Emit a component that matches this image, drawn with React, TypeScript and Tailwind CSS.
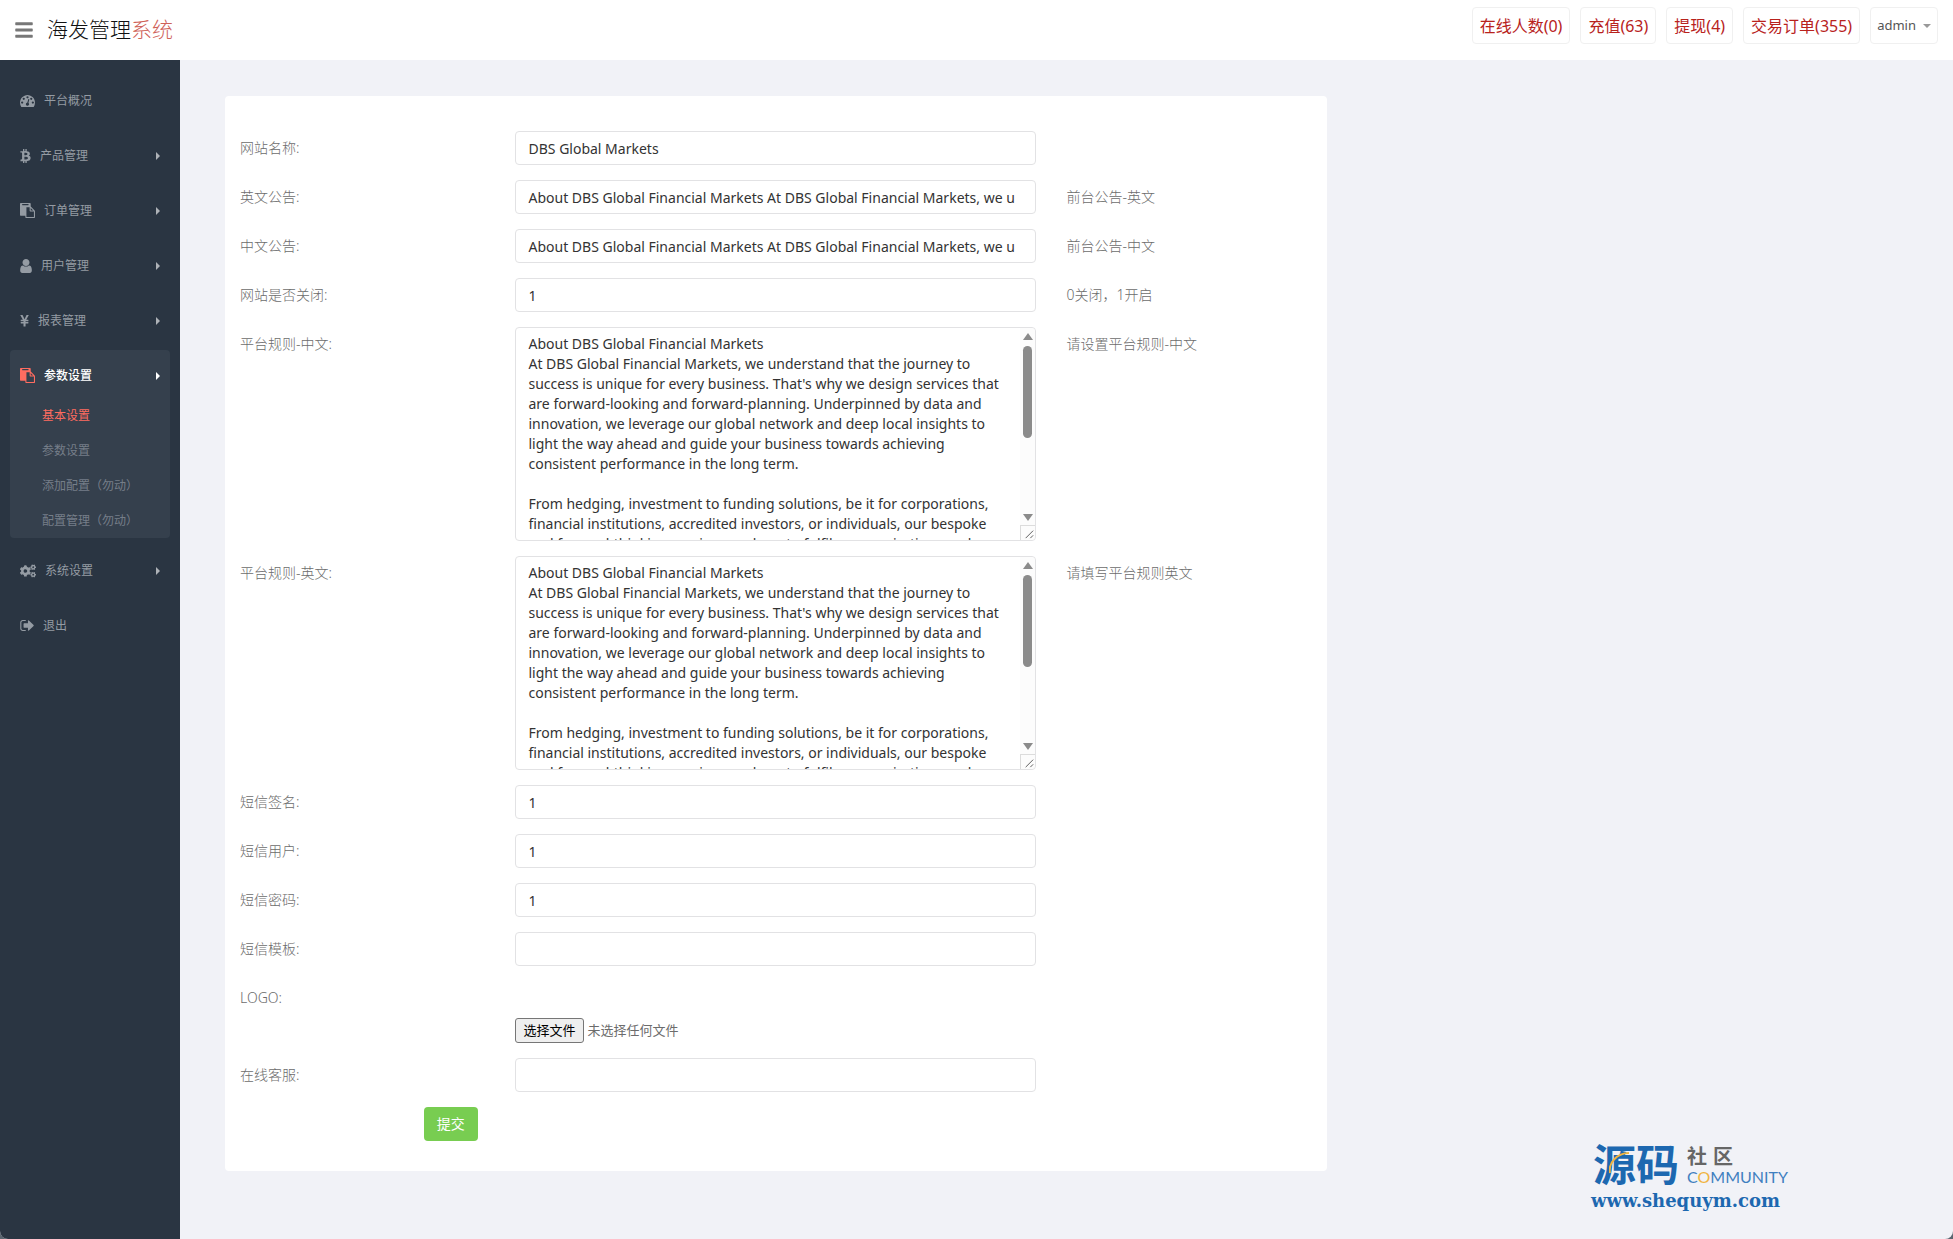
import type { FormEvent, ReactNode } from 'react'
import { FaBars, FaBtc, FaCogs } from 'react-icons/fa'

const rules = `About DBS Global Financial Markets
At DBS Global Financial Markets, we understand that the journey to success is unique for every business. That's why we design services that are forward-looking and forward-planning. Underpinned by data and innovation, we leverage our global network and deep local insights to light the way ahead and guide your business towards achieving consistent performance in the long term.

From hedging, investment to funding solutions, be it for corporations, financial institutions, accredited investors, or individuals, our bespoke and forward-thinking services are here to fulfil your aspirations and goals.

Our teams work across the region to provide access to markets in foreign exchange, interest rates, credit, equities and commodities. With an established presence in Asia, we offer timely research and ideas that support informed decisions.

Speak with our specialists to learn how a tailored approach can help you manage risk, raise capital and grow your business with confidence.

We are committed to building lasting relationships with each of our clients.`

const notice =
  'About DBS Global Financial Markets At DBS Global Financial Markets, we understand that the journey to success is unique for every business.'

interface Field {
  name: string
  label: string
  value?: string
  hint?: string
  type?: 'text' | 'textarea' | 'file'
}

const fields: Field[] = [
  { name: 'web_name', label: '网站名称:', value: 'DBS Global Markets' },
  { name: 'notice_en', label: '英文公告:', value: notice, hint: '前台公告-英文' },
  { name: 'notice_cn', label: '中文公告:', value: notice, hint: '前台公告-中文' },
  { name: 'web_open', label: '网站是否关闭:', value: '1', hint: '0关闭，1开启' },
  { name: 'rule_cn', label: '平台规则-中文:', value: rules, hint: '请设置平台规则-中文', type: 'textarea' },
  { name: 'rule_en', label: '平台规则-英文:', value: rules, hint: '请填写平台规则英文', type: 'textarea' },
  { name: 'sms_sign', label: '短信签名:', value: '1' },
  { name: 'sms_user', label: '短信用户:', value: '1' },
  { name: 'sms_pwd', label: '短信密码:', value: '1' },
  { name: 'sms_tpl', label: '短信模板:' },
  { name: 'logo', label: 'LOGO:', type: 'file' },
  { name: 'service', label: '在线客服:' },
]

const DashboardIcon = () => (
  <svg viewBox="0 256 1792 1408" className="h-3 w-[15px]" fill="currentColor">
    <path d="M384 1152q0-53-37.5-90.5t-90.5-37.5-90.5 37.5-37.5 90.5 37.5 90.5 90.5 37.5 90.5-37.5 37.5-90.5zm192-448q0-53-37.5-90.5t-90.5-37.5-90.5 37.5-37.5 90.5 37.5 90.5 90.5 37.5 90.5-37.5 37.5-90.5zm428 481l101-382q6-26-7.5-48.5t-38.5-29.5-48 6.5-30 39.5l-101 382q-60 5-107 43.5t-63 98.5q-20 77 20 146t117 89 146-20 89-117q16-60-6-117t-72-91zm660-33q0-53-37.5-90.5t-90.5-37.5-90.5 37.5-37.5 90.5 37.5 90.5 90.5 37.5 90.5-37.5 37.5-90.5zm-640-640q0-53-37.5-90.5t-90.5-37.5-90.5 37.5-37.5 90.5 37.5 90.5 90.5 37.5 90.5-37.5 37.5-90.5zm448 192q0-53-37.5-90.5t-90.5-37.5-90.5 37.5-37.5 90.5 37.5 90.5 90.5 37.5 90.5-37.5 37.5-90.5zm320 448q0 261-141 483-19 29-54 29h-1402q-35 0-54-29-141-221-141-483 0-182 71-348t191-286 286-191 348-71 348 71 286 191 191 286 71 348z" />
  </svg>
)

const PasteIcon = () => (
  <svg viewBox="0 0 1792 1792" className="size-[15px]" fill="currentColor">
    <path d="M768 1664h896v-640h-416q-40 0-68-28t-28-68v-416h-384v1152zm256-1440v-64q0-13-9.5-22.5t-22.5-9.5h-704q-13 0-22.5 9.5t-9.5 22.5v64q0 13 9.5 22.5t22.5 9.5h704q13 0 22.5-9.5t9.5-22.5zm256 672h299l-299-299v299zm512 128v672q0 40-28 68t-68 28h-960q-40 0-68-28t-28-68v-160h-544q-40 0-68-28t-28-68v-1344q0-40 28-68t68-28h1088q40 0 68 28t28 68v328q21 13 36 28l408 408q28 28 48 76t20 88z" />
  </svg>
)

const UserIcon = () => (
  <svg viewBox="256 128 1280 1536" className="h-[14px] w-3" fill="currentColor">
    <path d="M1536 1399q0 109-62.5 187t-150.5 78h-854q-88 0-150.5-78t-62.5-187q0-85 8.5-160.5t31.5-152 58.5-131 94-89 134.5-34.5q131 128 313 128t313-128q76 0 134.5 34.5t94 89 58.5 131 31.5 152 8.5 160.5zm-256-887q0 159-112.5 271.5t-271.5 112.5-271.5-112.5-112.5-271.5 112.5-271.5 271.5-112.5 271.5 112.5 112.5 271.5z" />
  </svg>
)

const YenIcon = () => (
  <svg viewBox="382 256 1027 1280" className="h-3 w-[9px]" fill="currentColor">
    <path d="M985.5 1536h-172q-13 0-22.5-9t-9.5-23v-330h-288q-13 0-22.5-9t-9.5-23v-103q0-13 9.5-22.5t22.5-9.5h288v-85h-288q-13 0-22.5-9t-9.5-23v-104q0-13 9.5-22.5t22.5-9.5h214l-321-578q-8-16 0-32 10-16 28-16h194q19 0 29 18l215 425q19 38 56 125 10-24 30.5-68t27.5-61l191-420q8-19 29-19h191q17 0 27 16 9 14 1 31l-313 579h215q13 0 22.5 9.5t9.5 22.5v104q0 14-9.5 23t-22.5 9h-290v85h290q13 0 22.5 9.5t9.5 22.5v103q0 14-9.5 23t-22.5 9h-290v330q0 13-9.5 22.5t-22.5 9.5z" />
  </svg>
)

const SignOutIcon = () => (
  <svg viewBox="0 256 1568 1280" className="h-[11px] w-[14px]" fill="currentColor">
    <path d="M640 1440q0 4 1 20t.5 26.5-3 23.5-10 19.5-20.5 6.5h-320q-119 0-203.5-84.5t-84.5-203.5v-704q0-119 84.5-203.5t203.5-84.5h320q13 0 22.5 9.5t9.5 22.5q0 4 1 20t.5 26.5-3 23.5-10 19.5-20.5 6.5h-320q-66 0-113 47t-47 113v704q0 66 47 113t113 47h312l11.5 1 11.5 3 8 5.5 7 9 2 13.5zm928-544q0 26-19 45l-544 544q-19 19-45 19t-45-19-19-45v-288h-448q-26 0-45-19t-19-45v-384q0-26 19-45t45-19h448v-288q0-26 19-45t45-19 45 19l544 544q19 19 19 45z" />
  </svg>
)

interface MenuItem {
  label: string
  icon: ReactNode
  arrow?: boolean
  children?: string[]
}

const menu: MenuItem[] = [
  { label: '平台概况', icon: <DashboardIcon /> },
  { label: '产品管理', icon: <FaBtc className="h-[14px] w-[11px]" />, arrow: true },
  { label: '订单管理', icon: <PasteIcon />, arrow: true },
  { label: '用户管理', icon: <UserIcon />, arrow: true },
  { label: '报表管理', icon: <YenIcon />, arrow: true },
  {
    label: '参数设置',
    icon: <PasteIcon />,
    arrow: true,
    children: ['基本设置', '参数设置', '添加配置（勿动）', '配置管理（勿动）'],
  },
  { label: '系统设置', icon: <FaCogs className="size-4" />, arrow: true },
  { label: '退出', icon: <SignOutIcon /> },
]

const stats = ['在线人数(0)', '充值(63)', '提现(4)', '交易订单(355)']

const Header = () => (
  <header className="flex h-[60px] items-start justify-between bg-white pr-[15px] pl-[14px]">
    <div className="flex h-full items-center gap-[13px]">
      <button type="button" aria-label="菜单" className="text-[#777]">
        <FaBars className="size-5" />
      </button>
      <a href="#" className="text-[21px] font-light text-[#111]">
        海发管理<span className="text-[#cf6259]">系统</span>
      </a>
    </div>
    <div className="flex gap-[10px] pt-[7px]">
      {stats.map((s) => (
        <a
          key={s}
          href="#"
          className="flex h-[37px] items-center rounded border border-[#f0f0f0] px-[7px] text-base text-[#b8221c]"
        >
          {s}
        </a>
      ))}
      <button
        type="button"
        className="flex h-[37px] items-center gap-[7px] rounded border border-[#f0f0f0] px-[6px] text-[13px] text-[#555]"
      >
        admin
        <span className="border-x-4 border-t-4 border-x-transparent border-t-[#999]" />
      </button>
    </div>
  </header>
)

const Sidebar = () => (
  <aside className="w-[180px] shrink-0 bg-[#2a3542] px-[10px] pt-[15px] text-xs">
    <ul className="flex flex-col gap-[7px]">
      {menu.map((item) => (
        <li key={item.label} className={item.children ? 'rounded bg-[#35404d]' : ''}>
          <a
            href="#"
            className={
              item.children
                ? 'flex h-12 items-center gap-[9px] px-[10px] pt-[3px] text-white'
                : 'flex h-12 items-center gap-[9px] px-[10px] pt-[3px] text-[#949ba3]'
            }
          >
            <span className={item.children ? 'text-[#ff6c60]' : ''}>{item.icon}</span>
            <span className={item.children ? 'font-medium' : 'font-normal'}>{item.label}</span>
            {item.arrow && (
              <span
                className={
                  item.children
                    ? 'ml-auto border-y-4 border-l-4 border-y-transparent border-l-white'
                    : 'ml-auto border-y-4 border-l-4 border-y-transparent border-l-[#aeb2b7]'
                }
              />
            )}
          </a>
          {item.children && (
            <ul>
              {item.children.map((child, i) => (
                <li key={child}>
                  <a
                    href="#"
                    className={
                      i === 0
                        ? 'block pl-8 leading-[35px] text-[#ff6c60]'
                        : 'block pl-8 leading-[35px] text-[#757e89]'
                    }
                  >
                    {child}
                  </a>
                </li>
              ))}
            </ul>
          )}
        </li>
      ))}
    </ul>
  </aside>
)

const ScrollTrack = () => (
  <div
    aria-hidden="true"
    className="pointer-events-none absolute inset-y-px right-px flex w-[15px] flex-col items-center rounded-r bg-[#fcfcfc] pt-[5px]"
  >
    <span className="border-x-[5px] border-b-[7px] border-x-transparent border-b-[#8b8b8b]" />
    <span className="mt-[6px] h-[92px] w-[9px] rounded-full bg-[#8b8b8b]" />
    <span className="mt-auto mb-1 border-x-[5px] border-t-[7px] border-x-transparent border-t-[#8b8b8b]" />
    <svg viewBox="0 0 15 15" className="size-[15px] border-t border-l border-[#dcdcdc]" stroke="#555">
      <path d="M5 13L13 5M10 13L13 10" />
    </svg>
  </div>
)

const FormControl = ({ field }: { field: Field }) => {
  if (field.type === 'textarea') {
    return (
      <div className="relative">
        <textarea
          id={field.name}
          name={field.name}
          defaultValue={field.value}
          className="block h-[214px] w-full resize-none rounded border border-[#e2e2e4] py-[6px] pr-[27px] pl-3 leading-5 text-[#333]"
        />
        <ScrollTrack />
      </div>
    )
  }
  if (field.type === 'file') {
    return (
      <div className="mt-[37px] flex items-center gap-1 text-[13px]">
        <input id={field.name} name={field.name} type="file" className="peer sr-only" />
        <label
          htmlFor={field.name}
          className="flex h-[25px] items-center rounded-[3px] border border-[#767676] bg-[#efefef] px-[7px] text-black"
        >
          选择文件
        </label>
        <span>未选择任何文件</span>
      </div>
    )
  }
  return (
    <input
      id={field.name}
      name={field.name}
      type="text"
      defaultValue={field.value}
      className="block h-[34px] w-full rounded border border-[#e2e2e4] pr-5 pl-3 text-[#333]"
    />
  )
}

const SettingsForm = () => {
  const onSubmit = (e: FormEvent) => e.preventDefault()

  return (
    <form onSubmit={onSubmit} className="rounded bg-white pt-[35px] pb-[30px] text-sm text-[#6c6c6c]">
      {fields.map((field) => (
        <div key={field.name} className="mb-[15px] grid grid-cols-12 items-start">
          <label htmlFor={field.name} className="col-span-3 px-[15px] pt-[7px] leading-5 font-light">
            {field.label}
          </label>
          <div className="col-span-6 px-[15px]">
            <FormControl field={field} />
          </div>
          {field.hint && (
            <span className="col-span-3 px-[15px] pt-[7px] leading-5 font-light">{field.hint}</span>
          )}
        </div>
      ))}
      <div className="grid grid-cols-12">
        <div className="col-span-10 col-start-3 px-[15px]">
          <button type="submit" className="h-[34px] rounded bg-[#78cd51] px-[13px] text-white">
            提交
          </button>
        </div>
      </div>
    </form>
  )
}

const Watermark = () => (
  <div className="absolute right-[162px] bottom-6 w-[200px] whitespace-nowrap text-[#1d68b0]">
    <div className="flex items-end gap-2 pl-[2px]">
      <div className="relative shrink-0 text-[43px] leading-[44px] font-bold">
        源码
        <svg viewBox="0 0 24 24" className="absolute top-2 left-4 size-6" fill="none">
          <path d="M1 22C-1 12 8 2 20 2" stroke="#f0b440" strokeWidth="2" />
        </svg>
      </div>
      <div className="font-['Lato','Noto_Sans_CJK_SC',sans-serif]">
        <div className="flex gap-[6px] text-[20px] leading-[22px] font-bold text-[#666]">
          <span>社</span>
          <span>区</span>
        </div>
        <div className="text-[16px] leading-[20px] text-[#3f7fc0]">
          C<span className="text-[#f0b440]">O</span>MMUNITY
        </div>
      </div>
    </div>
    <div className="font-['DejaVu_Serif'] text-[18px] leading-7 font-bold">www.shequym.com</div>
  </div>
)

export default function App() {
  return (
    <div className="bg-[#5b6670] font-['Noto_Sans','Noto_Sans_CJK_SC',sans-serif]">
      <div className="relative flex min-h-screen flex-col overflow-hidden rounded-b-lg bg-[#f1f2f7]">
        <Header />
        <div className="flex flex-1">
          <Sidebar />
          <main className="flex-1 pt-9 pr-[45px] pl-[30px]">
            <div className="w-2/3 px-[15px]">
              <SettingsForm />
            </div>
          </main>
        </div>
        <Watermark />
      </div>
    </div>
  )
}
